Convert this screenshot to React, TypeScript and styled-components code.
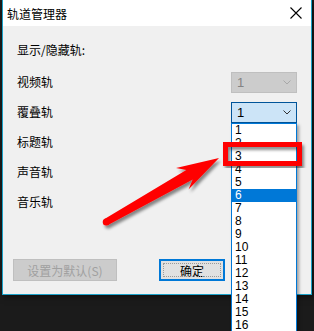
import styled, { createGlobalStyle } from 'styled-components';

const GlobalStyle = createGlobalStyle`
  html, body {
    margin: 0;
    padding: 0;
    background: #1b1b1b;
  }
  body {
    font-family: 'Noto Sans CJK SC', 'Liberation Sans', sans-serif;
  }
`;

const Page = styled.div`
  position: relative;
  width: 314px;
  height: 331px;
  overflow: hidden;
  background: #1b1b1b;
`;

const Dialog = styled.div`
  box-sizing: border-box;
  margin-left: 2px;
  width: 310px;
  height: 295px;
  display: flex;
  flex-direction: column;
  background: #f0f0f0;
  border: 1px solid #1ba1c8;
  border-top: none;
  box-shadow: 2px 2px 6px rgba(0, 0, 0, 0.5);
`;

const TitleBar = styled.div`
  height: 26px;
  display: flex;
  align-items: center;
  justify-content: space-between;
  padding: 0 9px 0 4px;
  background: #ffffff;
  font-size: 12px;
  color: #000;
`;

const Body = styled.div`
  padding: 16px 14px 0 14px;
  display: flex;
  flex-direction: column;
  gap: 10px;
  font-size: 12px;
  color: #000;
`;

const Heading = styled.div`
  line-height: 16px;
  margin-bottom: 4px;
`;

const Row = styled.div`
  height: 20px;
  display: flex;
  align-items: center;
  justify-content: space-between;
  position: relative;
`;

const Label = styled.span`
  line-height: 20px;
`;

const Select = styled.div<{ $disabled?: boolean }>`
  position: relative;
  box-sizing: border-box;
  width: 66px;
  height: 21px;
  display: flex;
  align-items: center;
  justify-content: space-between;
  padding: 0 5px 0 5px;
  font-family: 'Liberation Sans', sans-serif;
  font-size: 13px;
  background: ${({ $disabled }) => ($disabled ? '#cccccc' : '#cce4f7')};
  border: 1px solid ${({ $disabled }) => ($disabled ? '#bfbfbf' : '#005499')};
  color: ${({ $disabled }) => ($disabled ? '#838383' : '#000')};
`;

const List = styled.div`
  position: absolute;
  top: 20px;
  left: -1px;
  width: 66px;
  box-sizing: border-box;
  background: #fff;
  border: 1px solid #0078d7;
  box-shadow: 2px 2px 3px rgba(0, 0, 0, 0.35);
  z-index: 2;
`;

const Item = styled.div<{ $active?: boolean }>`
  height: 13px;
  line-height: 13px;
  padding-left: 3px;
  font-family: 'Liberation Sans', sans-serif;
  font-size: 12px;
  background: ${({ $active }) => ($active ? '#0078d7' : 'transparent')};
  color: ${({ $active }) => ($active ? '#fff' : '#000')};
`;

const Footer = styled.div`
  margin-top: auto;
  padding: 0 0 13px 10px;
  display: flex;
  gap: 42px;
`;

const Button = styled.div<{ $primary?: boolean; $width: number }>`
  position: relative;
  box-sizing: border-box;
  width: ${({ $width }) => $width}px;
  height: 22px;
  display: flex;
  align-items: center;
  justify-content: center;
  font-size: 12px;
  background: ${({ $primary }) => ($primary ? '#e1e1e1' : '#cccccc')};
  border: ${({ $primary }) => ($primary ? '2px solid #0078d7' : '1px solid #bfbfbf')};
  color: ${({ $primary }) => ($primary ? '#000' : '#a0a0a0')};

  ${({ $primary }) =>
    $primary &&
    `
    &::after {
      content: '';
      position: absolute;
      inset: 2px;
      border: 1px dotted #9a9a9a;
    }
  `}
`;

const Overlay = styled.svg`
  position: absolute;
  top: 0;
  left: 0;
  pointer-events: none;
  z-index: 5;
`;

const Chevron = ({ color }: { color: string }) => (
  <svg width="8" height="5" viewBox="0 0 8 5">
    <polyline points="0.5,0.5 4,4 7.5,0.5" fill="none" stroke={color} strokeWidth="1" />
  </svg>
);

const CloseIcon = () => (
  <svg width="12" height="12" viewBox="0 0 12 12">
    <path d="M0.5 0.5 L11.5 11.5 M11.5 0.5 L0.5 11.5" stroke="#000" strokeWidth="1.1" />
  </svg>
);

const tracks = ['视频轨', '覆叠轨', '标题轨', '声音轨', '音乐轨'];
const options = Array.from({ length: 16 }, (_, i) => i + 1);

export default function App() {
  return (
    <Page>
      <GlobalStyle />
      <Dialog>
        <TitleBar>
          <span>轨道管理器</span>
          <CloseIcon />
        </TitleBar>
        <Body>
          <Heading>显示/隐藏轨:</Heading>
          {tracks.map((name, i) => (
            <Row key={name}>
              <Label>{name}</Label>
              {i === 0 && (
                <Select $disabled>
                  <span>1</span>
                  <Chevron color="#a8a8a8" />
                </Select>
              )}
              {i === 1 && (
                <Select>
                  <span>1</span>
                  <Chevron color="#333" />
                  <List>
                    {options.map((n) => (
                      <Item key={n} $active={n === 6}>
                        {n}
                      </Item>
                    ))}
                  </List>
                </Select>
              )}
            </Row>
          ))}
        </Body>
        <Footer>
          <Button $width={104}>设置为默认(S)</Button>
          <Button $primary $width={66}>确定</Button>
        </Footer>
      </Dialog>

      <Overlay width="314" height="331" viewBox="0 0 314 331">
        <defs>
          <filter id="shadow" x="-20%" y="-20%" width="140%" height="140%">
            <feDropShadow dx="2" dy="3" stdDeviation="1.8" floodColor="#000" floodOpacity="0.45" />
          </filter>
        </defs>
        <rect x="225.5" y="144.5" width="74" height="19" fill="none" stroke="#ff0000" strokeWidth="5" filter="url(#shadow)" />
        <g filter="url(#shadow)" fill="#ff0000">
          <polygon points="219,158 188.5,189.5 192.7,179.6 108,225.1 104.5,218.9 186.3,169.9 176,168" />
          <circle cx="106.2" cy="222" r="3.5" />
        </g>
      </Overlay>
    </Page>
  );
}
